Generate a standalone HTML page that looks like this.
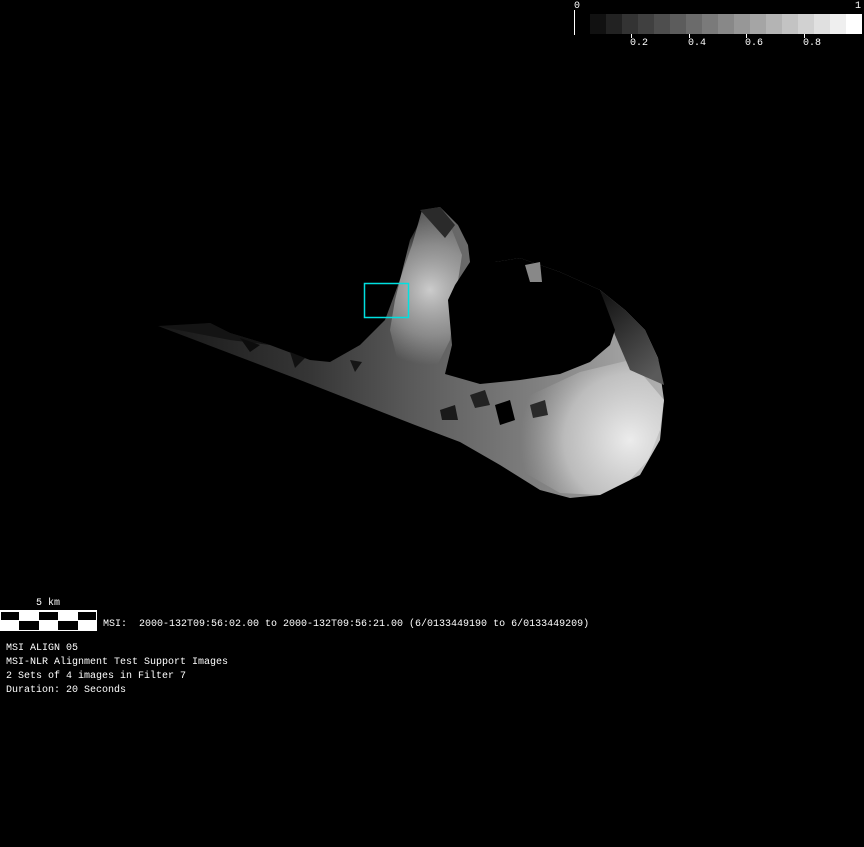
<!DOCTYPE html>
<html><head><meta charset="utf-8"><style>
html,body{margin:0;padding:0;background:#000;}
body{width:864px;height:847px;position:relative;overflow:hidden;font-family:"Liberation Mono",monospace;font-size:10px;color:#fff;}
.t{position:absolute;white-space:pre;line-height:12px;}
</style></head><body>
<svg width="864" height="847" style="position:absolute;left:0;top:0">
<defs>
<linearGradient id="g" x1="160" y1="0" x2="664" y2="0" gradientUnits="userSpaceOnUse">
<stop offset="0" stop-color="#181818"/><stop offset="0.3" stop-color="#363636"/>
<stop offset="0.5" stop-color="#5a5a5a"/><stop offset="0.75" stop-color="#808080"/><stop offset="1" stop-color="#b0b0b0"/>
</linearGradient>
<radialGradient id="r" cx="430" cy="290" r="75" gradientUnits="userSpaceOnUse">
<stop offset="0" stop-color="#d8d8d8" stop-opacity="0.9"/><stop offset="0.6" stop-color="#b8b8b8" stop-opacity="0.5"/><stop offset="1" stop-color="#b0b0b0" stop-opacity="0"/>
</radialGradient>
<radialGradient id="r2" cx="630" cy="440" r="110" gradientUnits="userSpaceOnUse">
<stop offset="0" stop-color="#ececec" stop-opacity="1"/><stop offset="0.6" stop-color="#cfcfcf" stop-opacity="0.7"/><stop offset="1" stop-color="#aaa" stop-opacity="0"/>
</radialGradient>
<linearGradient id="d" x1="600" y1="300" x2="660" y2="370" gradientUnits="userSpaceOnUse">
<stop offset="0" stop-color="#151515"/><stop offset="1" stop-color="#5a5a5a"/>
</linearGradient>
</defs>
<path d="M158,326 L175,327 L210,323 L230,333 L270,345 L310,360 L330,362 L360,345 L385,320 L398,285 L412,245 L422,210 L440,207 L458,225 L468,245 L470,262 L495,262 L520,258 L560,272 L600,290 L625,310 L645,330 L658,358 L664,400 L660,430 L648,460 L630,480 L600,495 L570,498 L540,490 L500,465 L460,442 L415,425 L300,380 Z" fill="url(#g)"/>
<path d="M395,300 L410,240 L425,212 L450,225 L462,255 L455,300 L450,340 L430,380 L400,370 L390,330 Z" fill="url(#r)"/>
<path d="M520,400 L580,372 L630,360 L664,400 L660,440 L640,475 L600,495 L560,493 L520,470 L500,440 Z" fill="url(#r2)"/>
<path d="M600,290 L625,310 L645,330 L658,358 L664,385 L630,370 L615,335 Z" fill="url(#d)"/>
<path d="M470,262 L495,262 L520,258 L560,272 L600,290 L615,330 L610,345 L590,362 L560,374 L520,380 L480,384 L445,374 L452,345 L448,300 L455,285 Z" fill="#000"/>
<path d="M158,326 L210,323 L230,333 L270,345 L230,340 Z" fill="#141414"/>
<path d="M240,338 L260,345 L250,352 Z" fill="#0c0c0c"/>
<path d="M290,352 L305,358 L295,368 Z" fill="#111"/>
<path d="M350,360 L362,362 L355,372 Z" fill="#151515"/>
<path d="M420,210 L440,207 L455,225 L445,238 Z" fill="#2a2a2a"/>
<path d="M525,265 L540,262 L542,282 L530,282 Z" fill="#888"/>
<path d="M495,405 L510,400 L515,420 L500,425 Z" fill="#000"/>
<path d="M470,395 L485,390 L490,405 L475,408 Z" fill="#222"/>
<path d="M530,405 L545,400 L548,415 L533,418 Z" fill="#2a2a2a"/>
<path d="M440,410 L455,405 L458,420 L442,420 Z" fill="#1a1a1a"/>
<rect x="364.5" y="283.5" width="44" height="34" fill="none" stroke="#00e0e0" stroke-width="1.5"/>
<line x1="574.5" y1="10" x2="574.5" y2="35" stroke="#fff"/>
<g>
<rect x="590" y="14" width="16" height="20" fill="#111"/>
<rect x="606" y="14" width="16" height="20" fill="#222"/>
<rect x="622" y="14" width="16" height="20" fill="#333"/>
<rect x="638" y="14" width="16" height="20" fill="#404040"/>
<rect x="654" y="14" width="16" height="20" fill="#4e4e4e"/>
<rect x="670" y="14" width="16" height="20" fill="#5c5c5c"/>
<rect x="686" y="14" width="16" height="20" fill="#6b6b6b"/>
<rect x="702" y="14" width="16" height="20" fill="#7a7a7a"/>
<rect x="718" y="14" width="16" height="20" fill="#888"/>
<rect x="734" y="14" width="16" height="20" fill="#979797"/>
<rect x="750" y="14" width="16" height="20" fill="#a5a5a5"/>
<rect x="766" y="14" width="16" height="20" fill="#b4b4b4"/>
<rect x="782" y="14" width="16" height="20" fill="#c3c3c3"/>
<rect x="798" y="14" width="16" height="20" fill="#d1d1d1"/>
<rect x="814" y="14" width="16" height="20" fill="#e0e0e0"/>
<rect x="830" y="14" width="16" height="20" fill="#efefef"/>
<rect x="846" y="14" width="16" height="20" fill="#fff"/>
</g>
<g stroke="#fff">
<line x1="631.5" y1="34" x2="631.5" y2="38"/><line x1="689.5" y1="34" x2="689.5" y2="38"/>
<line x1="746.5" y1="34" x2="746.5" y2="38"/><line x1="804.5" y1="34" x2="804.5" y2="38"/>
</g>
<rect x="0" y="610" width="97" height="21" fill="#fff"/>
<g fill="#000">
<rect x="1" y="612" width="18" height="8"/><rect x="39" y="612" width="19" height="8"/><rect x="78" y="612" width="18" height="8"/>
<rect x="19" y="621" width="20" height="9"/><rect x="58" y="621" width="20" height="9"/>
</g>
</svg>
<div class="t" style="left:574px;top:1px">0</div>
<div class="t" style="left:855px;top:1px">1</div>
<div class="t" style="left:630px;top:38px">0.2</div>
<div class="t" style="left:688px;top:38px">0.4</div>
<div class="t" style="left:745px;top:38px">0.6</div>
<div class="t" style="left:803px;top:38px">0.8</div>
<div class="t" style="left:36px;top:598px">5 km</div>
<div class="t" style="left:103px;top:619px">MSI:  2000-132T09:56:02.00 to 2000-132T09:56:21.00 (6/0133449190 to 6/0133449209)</div>
<div class="t" style="left:6px;top:642px;line-height:14px">MSI ALIGN 05
MSI-NLR Alignment Test Support Images
2 Sets of 4 images in Filter 7
Duration: 20 Seconds</div>
</body></html>
